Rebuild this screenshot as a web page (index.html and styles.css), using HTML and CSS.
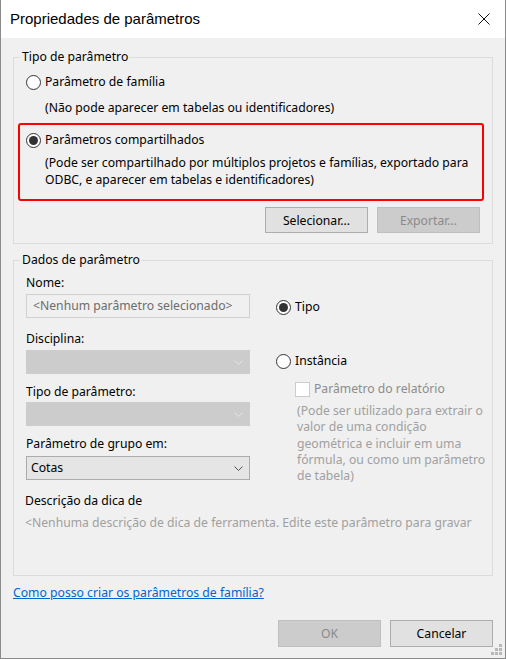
FILE: index.html
```html
<!DOCTYPE html>
<html lang="pt">
<head>
    <meta charset="UTF-8">
    <meta name="viewport" content="width=device-width, initial-scale=1.0">
    <title>Propriedades de parâmetros</title>
    <link rel="stylesheet" href="styles.css">
</head>
<body>
    <div class="window">
        <div class="titlebar">
            <span class="title">Propriedades de parâmetros</span>
            <span class="close">
                <svg width="12" height="12" viewBox="0 0 12 12">
                    <path d="M0.5 0.5 L11.5 11.5 M11.5 0.5 L0.5 11.5" stroke="#111" stroke-width="1" fill="none"/>
                </svg>
            </span>
        </div>

        <div class="content">
            <!-- Tipo de parametro -->
            <fieldset class="group group-type">
                <legend>Tipo de parâmetro</legend>
                <div class="option option-first">
                    <span class="radio"></span>
                    <span>Parâmetro de família</span>
                </div>
                <div class="note note-first">(Não pode aparecer em tabelas ou identificadores)</div>

                <div class="highlight">
                    <div class="option">
                        <span class="radio checked"></span>
                        <span>Parâmetros compartilhados</span>
                    </div>
                    <div class="note note-shared">(Pode ser compartilhado por múltiplos projetos e famílias, exportado para<br>ODBC, e aparecer em tabelas e identificadores)</div>
                </div>

                <div class="actions">
                    <button class="btn">Selecionar...</button>
                    <button class="btn" disabled>Exportar...</button>
                </div>
            </fieldset>

            <!-- Dados de parametro -->
            <fieldset class="group group-data">
                <legend>Dados de parâmetro</legend>
                <div class="params">
                    <div class="params-left">
                        <div class="field-label label-name">Nome:</div>
                        <div class="textbox">&lt;Nenhum parâmetro selecionado&gt;</div>

                        <div class="field-label label-disc">Disciplina:</div>
                        <div class="combo disabled">
                            <span></span>
                            <svg width="9" height="5" viewBox="0 0 9 5"><polyline points="0.5,0.5 4.5,4.5 8.5,0.5" fill="none" stroke="#e4e4e4"/></svg>
                        </div>

                        <div class="field-label label-type">Tipo de parâmetro:</div>
                        <div class="combo disabled combo-type">
                            <span></span>
                            <svg width="9" height="5" viewBox="0 0 9 5"><polyline points="0.5,0.5 4.5,4.5 8.5,0.5" fill="none" stroke="#e4e4e4"/></svg>
                        </div>

                        <div class="field-label label-group">Parâmetro de grupo em:</div>
                        <div class="combo combo-group">
                            <span>Cotas</span>
                            <svg width="9" height="5" viewBox="0 0 9 5"><polyline points="0.5,0.5 4.5,4.5 8.5,0.5" fill="none" stroke="#555"/></svg>
                        </div>
                    </div>

                    <div class="params-right">
                        <div class="option option-tipo">
                            <span class="radio checked"></span>
                            <span>Tipo</span>
                        </div>
                        <div class="option option-inst">
                            <span class="radio"></span>
                            <span>Instância</span>
                        </div>
                        <div class="check-row">
                            <span class="checkbox"></span>
                            <span>Parâmetro do relatório</span>
                        </div>
                        <div class="hint">(Pode ser utilizado para extrair o<br>valor de uma condição<br>geométrica e incluir em uma<br>fórmula, ou como um parâmetro<br>de tabela)</div>
                    </div>
                </div>

                <div class="tooltip-label">Descrição da dica de</div>
                <div class="tooltip-text">&lt;Nenhuma descrição de dica de ferramenta. Edite este parâmetro para gravar</div>
            </fieldset>

            <a class="help-link" href="#">Como posso criar os parâmetros de família?</a>

            <div class="footer">
                <button class="btn btn-footer" disabled>OK</button>
                <button class="btn btn-footer">Cancelar</button>
            </div>
        </div>

        <svg class="grip" width="11" height="11" viewBox="0 0 11 11">
            <rect x="8" y="0" width="3" height="3" fill="#b8b8b8"/>
            <rect x="4" y="4" width="3" height="3" fill="#b8b8b8"/>
            <rect x="8" y="4" width="3" height="3" fill="#b8b8b8"/>
            <rect x="0" y="8" width="3" height="3" fill="#b8b8b8"/>
            <rect x="4" y="8" width="3" height="3" fill="#b8b8b8"/>
            <rect x="8" y="8" width="3" height="3" fill="#b8b8b8"/>
        </svg>
    </div>
</body>
</html>
```

FILE: styles.css
```css
body {
    margin: 0;
    font-family: "Noto Sans", "Liberation Sans", sans-serif;
    font-size: 12.2px;
    line-height: 16px;
    color: #000;
    background-color: #fff;
}

.window {
    position: relative;
    width: 506px;
    height: 659px;
    box-sizing: border-box;
    border: 1px solid #8a8a8a;
    border-top: none;
    background-color: #f0f0f0;
    display: flex;
    flex-direction: column;
}

.titlebar {
    height: 38px;
    background-color: #fff;
    display: flex;
    align-items: center;
    justify-content: space-between;
    padding-left: 9px;
    font-family: "Liberation Sans", sans-serif;
    font-size: 15px;
}

.close {
    width: 42px;
    height: 38px;
    display: flex;
    align-items: center;
    justify-content: center;
}

.content {
    padding: 0 12px;
    display: flex;
    flex-direction: column;
}

.group {
    margin: 0;
    padding: 0;
    border: 1px solid #dcdcdc;
    min-width: 0;
}

.group legend {
    margin-left: 6px;
    padding: 0 2px;
    line-height: 14px;
}

.group-type {
    margin-top: 12px;
}

.group-data {
    margin-top: 9px;
    padding-bottom: 44px;
}

/* radio buttons */
.option {
    display: flex;
    align-items: center;
    gap: 4px;
    height: 16px;
}

.radio {
    width: 15px;
    height: 15px;
    box-sizing: border-box;
    border: 1px solid #333;
    border-radius: 50%;
    background-color: #fff;
    display: flex;
    align-items: center;
    justify-content: center;
}

.radio.checked::after {
    content: "";
    width: 9px;
    height: 9px;
    border-radius: 50%;
    background-color: #333;
}

.option-first {
    margin: 10px 0 0 12px;
}

.note-first {
    margin: 10px 0 0 31px;
}

.highlight {
    margin: 7px 0 0 4px;
    width: 466px;
    box-sizing: border-box;
    border: 2px solid #ff0000;
    border-radius: 3px;
    padding: 7px 0 11px 6px;
}

.note-shared {
    margin: 6px 0 0 19px;
    line-height: 17px;
}

.actions {
    display: flex;
    justify-content: flex-end;
    gap: 9px;
    margin: 6px 12px 10px 0;
}

.btn {
    width: 103px;
    height: 26px;
    font-family: inherit;
    font-size: 12.2px;
    color: #000;
    background-color: #e1e1e1;
    border: 1px solid #adadad;
    padding: 0;
}

.btn:disabled {
    background-color: #cccccc;
    border-color: #bfbfbf;
    color: #8a8a8a;
}

/* parameter data */
.params {
    display: grid;
    grid-template-columns: 224px 1fr;
    column-gap: 26px;
    padding-left: 12px;
}

.label-name {
    margin-top: 8px;
}

.label-disc {
    margin-top: 13px;
}

.label-type,
.label-group {
    margin-top: 10px;
}

.textbox {
    margin-top: 3px;
    height: 24px;
    box-sizing: border-box;
    border: 1px solid #d0d0d0;
    padding-left: 6px;
    line-height: 22px;
    color: #6d6d6d;
}

.combo {
    margin-top: 3px;
    height: 24px;
    box-sizing: border-box;
    display: flex;
    align-items: center;
    justify-content: space-between;
    padding: 0 6px 0 4px;
    background-color: #e5e5e5;
    border: 1px solid #acacac;
}

.combo.disabled {
    background-color: #cccccc;
    border-color: #cccccc;
}

.combo-type {
    margin-top: 2px;
}

.combo-group {
    margin-top: 4px;
}

.option-tipo {
    margin-top: 32px;
}

.option-inst {
    margin-top: 38px;
}

.check-row {
    display: flex;
    align-items: center;
    gap: 4px;
    height: 16px;
    margin: 12px 0 0 19px;
    color: #8c8c8c;
}

.checkbox {
    width: 15px;
    height: 15px;
    box-sizing: border-box;
    border: 1px solid #cccccc;
    background-color: #fff;
}

.hint {
    margin: 6px 0 0 21px;
    line-height: 16.25px;
    color: #a0a0a0;
    white-space: nowrap;
}

.tooltip-label {
    margin: 9px 0 0 11px;
}

.tooltip-text {
    margin: 6px 0 0 11px;
    white-space: nowrap;
    color: #a0a0a0;
}

.help-link {
    margin-top: 9px;
    align-self: flex-start;
    color: #0066cc;
    text-decoration: underline;
}

.footer {
    display: flex;
    justify-content: flex-end;
    gap: 9px;
    margin-top: 19px;
}

.btn-footer {
    height: 27px;
}

.grip {
    position: absolute;
    right: 3px;
    bottom: 3px;
}
```
